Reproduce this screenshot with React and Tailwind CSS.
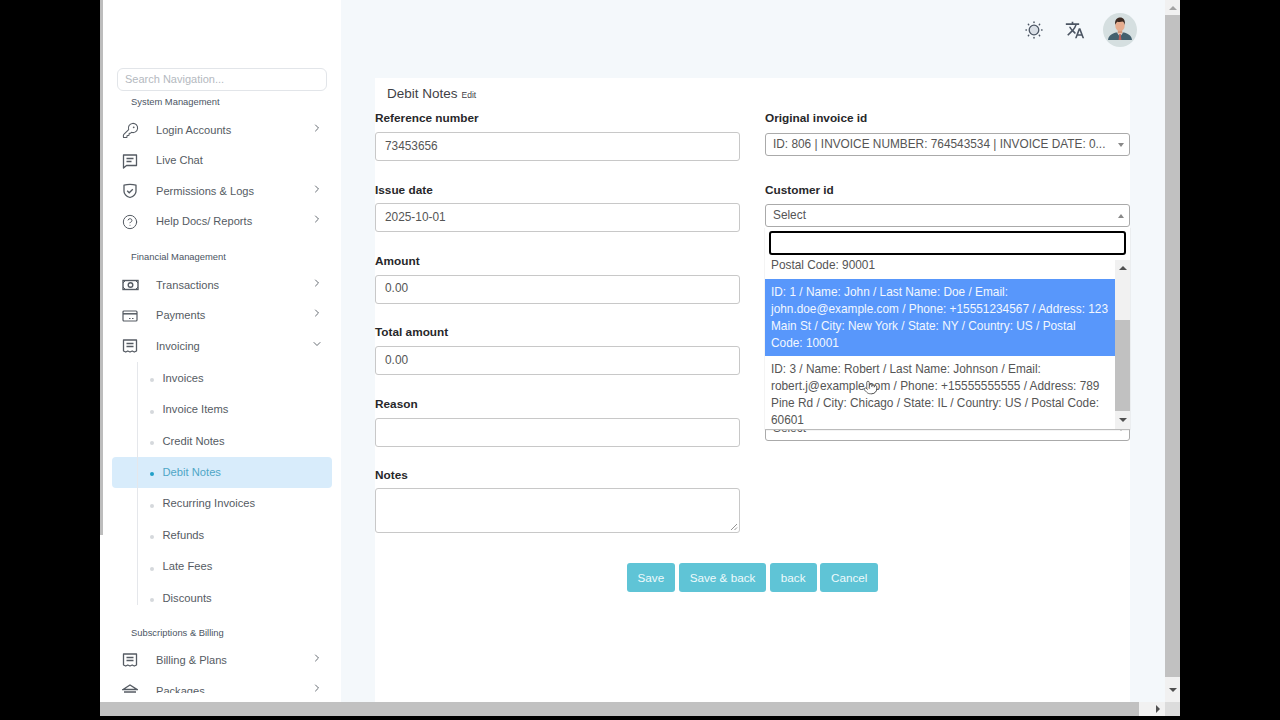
import React from 'react';
import { ChevronDown, ChevronRight, CircleHelp, KeyRound, Pointer } from 'lucide-react';
import { MdTranslate } from 'react-icons/md';

const SunIcon = () => (
  <svg width="18" height="18" viewBox="0 0 18 18" fill="none" stroke="#4b5563" strokeWidth="1.500" strokeLinecap="round">
    <circle cx="9" cy="9" r="4.800" fill="#d9dfe6" strokeWidth="1.300" />
    <path d="M9 1v.4M9 16.600v.4M1 9h.4M16.600 9h.4M3.400 3.400l.3.3M14.300 14.300l.3.3M3.400 14.600l.3-.3M14.300 3.700l.3-.3" />
  </svg>
);

const ChatIcon = () => (
  <svg width="16" height="16" viewBox="0 0 16 16" fill="none" stroke="currentColor" strokeWidth="1.3">
    <path d="M1.500 2h13v10.500H4.500L1.500 15z" strokeLinejoin="round" />
    <path d="M4.500 5.500h7M4.500 8.500h5" />
  </svg>
);

const ShieldIcon = () => (
  <svg width="16" height="16" viewBox="0 0 16 16" fill="none" stroke="currentColor" strokeWidth="1.3">
    <path d="M2 2.200c3.500-.9 8.500-.9 12 0v6c0 3-3 5.300-6 6.300-3-1-6-3.300-6-6.300z" strokeLinejoin="round" />
    <path d="M5.200 7.800l2 2 3.600-3.600" />
  </svg>
);

const CashIcon = () => (
  <svg width="17" height="12" viewBox="0 0 17 12" fill="none" stroke="currentColor" strokeWidth="1.4">
    <rect x="1" y="1.500" width="15" height="9" />
    <circle cx="8.500" cy="6" r="2.300" />
    <path d="M1 4l2.500-2.500M16 4l-2.500-2.500M1 8l2.500 2.500M16 8l-2.500 2.500" strokeWidth="1" />
  </svg>
);

const CardIcon = () => (
  <svg width="16" height="12" viewBox="0 0 16 12" fill="none" stroke="currentColor" strokeWidth="1.2">
    <rect x="1" y="1" width="14" height="10" rx="1" />
    <path d="M1 3.800h14" strokeWidth="1.500" />
    <path d="M7 8.500h1.500M10 8.500h1.500" />
  </svg>
);

const ReceiptIcon = () => (
  <svg width="16" height="14" viewBox="0 0 16 14" fill="none" stroke="currentColor" strokeWidth="1.3">
    <path d="M1.500 1h13v11l-2.200 1-2.100-1-2.200 1-2.200-1-2.100 1-2.200-1z" strokeLinejoin="round" />
    <path d="M4.500 4.500h7M4.500 7.500h7" />
  </svg>
);

const BoxIcon = () => (
  <svg width="16" height="14" viewBox="0 0 16 14" fill="none" stroke="currentColor" strokeWidth="1.3">
    <path d="M1 5.500L8 1l7 4.500H1zM2 8h12" />
  </svg>
);

const Avatar = () => (
  <svg width="34" height="34" viewBox="0 0 34 34">
    <circle cx="17" cy="17" r="17" fill="#d5dfe0" />
    <path d="M5 27c.5-4 3-6 8-7.500h8c5 1.500 7.500 3.500 8 7.500z" fill="#43606e" />
    <path d="M14 19.500L17 24l3-4.500z" fill="#f3ece6" />
    <path d="M16.200 21h1.600l.6 6h-2.800z" fill="#b9605a" />
    <rect x="14.800" y="16" width="4.400" height="4.500" fill="#d79a7c" />
    <ellipse cx="17" cy="12.500" rx="4.700" ry="5.800" fill="#e6ad8f" />
    <path d="M12.100 12c-.5-5.500 1.900-7.500 5.100-7.500 3 0 5.200 2 4.700 7.500-.5-2-1.200-3-2.200-3.500-2 .6-4 .5-5.500.2-.8.800-1.700 1.800-2.100 3.300z" fill="#3c2a22" />
  </svg>
);

const NavSection = ({ children }) => (
  <div className="pl-[31px] h-[14px] flex items-center text-[9.400px] text-[#4b5563]">{children}</div>
);

const NavItem = ({ icon, label, arrow, open }) => (
  <div className="flex items-center h-[30.500px] pl-[22px] pr-[18px] text-[#555b63]">
    <span className="w-[34px] flex justify-start">{icon}</span>
    <span className="flex-1 text-[11.100px]">{label}</span>
    {arrow && (open ? <ChevronDown size={12} strokeWidth={1.8} className="-mt-[5px]" /> : <ChevronRight size={12} strokeWidth={1.8} className="-mt-[5px]" />)}
  </div>
);

const SubItem = ({ label, active }) => (
  <div className={`flex items-center h-[31.400px] w-[220px] pl-[38px] text-[11.200px] rounded-sm ${active ? 'bg-[#d8ecfb] text-[#4fa6c6]' : 'text-[#555b63]'}`}>
    <span className={`w-1 h-1 rounded-full mr-[8.500px] mt-1 ${active ? 'bg-[#22a0c8]' : 'bg-[#d5d8dc]'}`} />
    {label}
  </div>
);

const Field = ({ label, children }) => (
  <div className="h-[71.400px]">
    <div className="h-[14px] flex items-center text-[11.800px] font-bold text-[#27272a]">{label}</div>
    {children}
  </div>
);

const TextInput = ({ value }) => (
  <div className="mt-[6px] h-[29px] px-[9px] flex items-center border border-[#c8c8c8] rounded-[3px] bg-white text-[11.850px] text-[#555]">{value}</div>
);

const SelectBox = ({ value, up, className }) => (
  <div className={`h-[23px] pl-[7px] pr-[5px] flex items-center border border-[#aaa] rounded-[3px] bg-white text-[11.850px] text-[#555] ${className}`}>
    <span className="flex-1 truncate">{value}</span>
    <span className={`ml-1 w-0 h-0 border-x-[3px] border-x-transparent ${up ? 'border-b-[4px] border-b-[#888]' : 'border-t-[4px] border-t-[#888]'}`} />
  </div>
);

const ActionButton = ({ children }) => (
  <button className="h-[29px] px-[11px] rounded-[3px] bg-[#5fc4d6] text-[11.700px] text-[#eefafc]">{children}</button>
);

export default function App() {
  return (
    <div className="relative h-screen bg-black overflow-hidden px-[100px] font-['Liberation_Sans',Arial,sans-serif]">
      <div className="h-[716px] flex flex-col bg-[#f4f8fb]">
        <div className="flex-1 flex min-h-0">
          <aside className="relative w-[241px] shrink-0 bg-white overflow-hidden pt-[68px]">
            <div className="absolute left-0 top-0 w-[3px] h-[535px] bg-[#bdbdbd]" />
            <div className="ml-[17px] w-[210px] h-[23px] px-[7px] flex items-center border border-[#e2e5e9] rounded-md text-[11px] text-[#b4b9c0]">Search Navigation...</div>
            <div className="mt-1"><NavSection>System Management</NavSection></div>
            <div className="mt-[6px]">
              <NavItem icon={<KeyRound size={17} strokeWidth={1.5} />} label="Login Accounts" arrow />
              <NavItem icon={<ChatIcon />} label="Live Chat" />
              <NavItem icon={<ShieldIcon />} label="Permissions & Logs" arrow />
              <NavItem icon={<CircleHelp size={16} strokeWidth={1.5} />} label="Help Docs/ Reports" arrow />
            </div>
            <div className="mt-[13px]"><NavSection>Financial Management</NavSection></div>
            <div className="mt-[6px]">
              <NavItem icon={<CashIcon />} label="Transactions" arrow />
              <NavItem icon={<CardIcon />} label="Payments" arrow />
              <NavItem icon={<ReceiptIcon />} label="Invoicing" arrow open />
            </div>
            <div className="relative ml-3 pt-[1px]">
              <div className="absolute left-[25px] top-0 bottom-[9px] w-px bg-[#e5e7eb]" />
              <SubItem label="Invoices" />
              <SubItem label="Invoice Items" />
              <SubItem label="Credit Notes" />
              <SubItem label="Debit Notes" active />
              <SubItem label="Recurring Invoices" />
              <SubItem label="Refunds" />
              <SubItem label="Late Fees" />
              <SubItem label="Discounts" />
            </div>
            <div className="mt-[12.500px]"><NavSection>Subscriptions & Billing</NavSection></div>
            <div className="mt-[5px]">
              <NavItem icon={<ReceiptIcon />} label="Billing & Plans" arrow />
              <div className="h-[17px] overflow-hidden">
                <NavItem icon={<BoxIcon />} label="Packages" arrow />
              </div>
            </div>
          </aside>

          <main className="flex-1 min-w-0 pl-[34px] pr-[35px]">
            <div className="h-[78px] pt-[13px] -mr-[7px] flex justify-end items-start text-[#4b5563]">
              <div className="h-[34px] flex items-center">
                <SunIcon />
                <MdTranslate size={20} className="ml-[22px] mr-[18px]" />
                <Avatar />
              </div>
            </div>
            <div className="bg-white h-[624px]">
              <div className="h-[34px] pl-3 flex items-baseline pt-[6px] gap-1 text-[#3f3f46]">
                <span className="text-[13.500px]">Debit Notes</span>
                <span className="text-[8.500px]">Edit</span>
              </div>
              <div className="grid grid-cols-2 gap-x-[25px]">
                <div>
                  <Field label="Reference number"><TextInput value="73453656" /></Field>
                  <Field label="Issue date"><TextInput value="2025-10-01" /></Field>
                  <Field label="Amount"><TextInput value="0.00" /></Field>
                  <Field label="Total amount"><TextInput value="0.00" /></Field>
                  <Field label="Reason"><TextInput value="" /></Field>
                  <div className="h-[14px] flex items-center text-[11.800px] font-bold text-[#27272a]">Notes</div>
                  <div className="relative mt-[5px] h-[45px] border border-[#c8c8c8] rounded-[3px]">
                    <svg className="absolute right-px bottom-px" width="8" height="8" viewBox="0 0 8 8" stroke="#777" strokeWidth="0.8">
                      <path d="M1 7l6-6M4.500 7L7 4.500" />
                    </svg>
                  </div>
                </div>
                <div className="relative">
                  <Field label="Original invoice id">
                    <SelectBox className="mt-[7px]" value="ID: 806 | INVOICE NUMBER: 764543534 | INVOICE DATE: 0..." />
                  </Field>
                  <Field label="Customer id">
                    <SelectBox className="mt-[7px]" value="Select" up />
                  </Field>
                  <div className="h-[162.800px]" />
                  <SelectBox value="Select" />
                  <div className="absolute left-0 right-0 top-[115px] h-[202px] bg-white z-10 overflow-hidden shadow-[0_1px_1px_#bbb]">
                    <div className="h-[33px] p-[4px]">
                      <div className="h-[24px] border-2 border-black rounded-[3px] bg-white" />
                    </div>
                    <div className="flex h-[169px]">
                      <div className="flex-1 min-w-0 text-[11.850px] leading-[17px] text-[#555]">
                        <div className="px-[6px] h-[19px] -mt-[4px] flex items-center">Postal Code: 90001</div>
                        <div className="mt-[4px] h-[77px] px-[6px] pt-[5px] bg-[#5897fb] text-[#f3f7ff]">
                          ID: 1 / Name: John / Last Name: Doe / Email: john.doe@example.com / Phone: +15551234567 / Address: 123 Main St / City: New York / State: NY / Country: US / Postal Code: 10001
                        </div>
                        <div className="px-[6px] pt-[5px]">
                          ID: 3 / Name: Robert / Last Name: Johnson / Email: robert.j@example.com / Phone: +15555555555 / Address: 789 Pine Rd / City: Chicago / State: IL / Country: US / Postal Code: 60601
                        </div>
                      </div>
                      <div className="w-[15px] shrink-0 bg-[#f1f1f1] flex flex-col items-center">
                        <div className="h-[16px] flex items-center"><span className="w-0 h-0 border-x-[4px] border-x-transparent border-b-[4px] border-b-[#505050]" /></div>
                        <div className="mt-[44px] h-[91px] w-full bg-[#c1c1c1]" />
                        <div className="flex-1 flex items-center"><span className="w-0 h-0 border-x-[4px] border-x-transparent border-t-[4px] border-t-[#505050]" /></div>
                      </div>
                    </div>
                  </div>
                </div>
              </div>
              <div className="mt-[30px] flex justify-center gap-[3.500px]">
                <ActionButton>Save</ActionButton>
                <ActionButton>Save &amp; back</ActionButton>
                <ActionButton>back</ActionButton>
                <ActionButton>Cancel</ActionButton>
              </div>
            </div>
          </main>

          <div className="w-[15px] shrink-0 bg-[#f1f1f1] flex flex-col items-center">
            <div className="h-[15px] flex items-center"><span className="w-0 h-0 border-x-[4px] border-x-transparent border-b-[4px] border-b-[#a3a3a3]" /></div>
            <div className="h-[662px] w-full bg-[#c1c1c1]" />
            <div className="flex-1 flex items-center"><span className="w-0 h-0 border-x-[4px] border-x-transparent border-t-[4px] border-t-[#505050]" /></div>
          </div>
        </div>
        <div className="h-[14px] flex bg-[#f1f1f1]">
          <div className="w-[1039px] bg-[#c1c1c1]" />
          <div className="w-[26px] flex items-center justify-end pr-[5px]"><span className="w-0 h-0 border-y-[4px] border-y-transparent border-l-[4px] border-l-[#505050]" /></div>
          <div className="w-[15px] bg-[#dcdcdc]" />
        </div>
      </div>
      <Pointer size={15} strokeWidth={1.2} className="absolute left-[863px] top-[380px] z-20 text-[#333] fill-white" />
    </div>
  );
}
